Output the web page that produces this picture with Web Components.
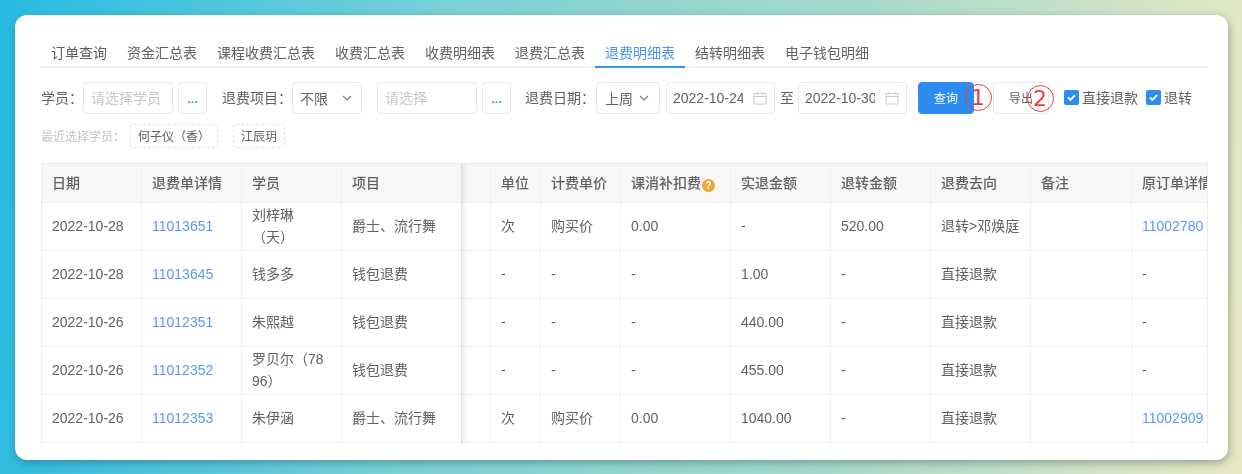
<!DOCTYPE html>
<html lang="zh">
<head>
<meta charset="utf-8">
<title>退费明细表</title>
<style>
html,body{margin:0;height:100%}
body{width:1242px;height:474px;box-sizing:border-box;padding:15px 14px 14px 15px;overflow:hidden;
background:linear-gradient(96deg,#27bbe2 0%,#7dd2d6 36%,#a8dacb 68%,#e9e9c4 100%);
font-family:"Liberation Sans","Noto Sans CJK SC",sans-serif;font-size:14px;color:#606266;text-spacing-trim:space-all}
.l{padding-bottom:3px}
</style>
</head>
<body>
<refund-card>
  <refund-tabs>
    <refund-tab>订单查询</refund-tab><refund-tab>资金汇总表</refund-tab><refund-tab>课程收费汇总表</refund-tab><refund-tab>收费汇总表</refund-tab><refund-tab>收费明细表</refund-tab><refund-tab>退费汇总表</refund-tab><refund-tab active>退费明细表</refund-tab><refund-tab>结转明细表</refund-tab><refund-tab>电子钱包明细</refund-tab>
  </refund-tabs>
  <refund-filters>
    <span class="l">学员：</span>
    <text-box w="90" placeholder>请选择学员</text-box>
    <dots-button style="margin-left:5px"></dots-button>
    <span class="l" style="margin-left:15px">退费项目：</span>
    <select-box w="70">不限</select-box>
    <text-box w="100" placeholder style="margin-left:15px">请选择</text-box>
    <dots-button style="margin-left:5px"></dots-button>
    <span class="l" style="margin-left:14px">退费日期：</span>
    <select-box w="64" pad="8" style="margin-left:1px">上周</select-box>
    <date-box style="margin-left:6px">2022-10-24</date-box>
    <span class="l" style="margin:0 4px 0 5px">至</span>
    <date-box>2022-10-30</date-box>
    <action-button primary style="margin-left:11px">查询</action-button>
    <action-button style="margin-left:19px">导出</action-button>
    <check-box style="margin-left:15px">直接退款</check-box>
    <check-box style="margin-left:8px">退转</check-box>
    <circle-mark style="left:923.5px;top:1.5px">1</circle-mark>
    <circle-mark style="left:985.5px;top:2.5px">2</circle-mark>
  </refund-filters>
  <recent-row>
    <span style="padding-bottom:2px">最近选择学员：</span>
    <dash-tag style="margin-left:5px">何子仪（香）</dash-tag>
    <dash-tag style="margin-left:15px">江辰玥</dash-tag>
  </recent-row>
  <refund-table></refund-table>
</refund-card>
<script>
function define(name, css, html, init){
  customElements.define(name, class extends HTMLElement{
    constructor(){super();this.attachShadow({mode:'open'}).innerHTML='<style>'+css+'</style>'+html;}
    connectedCallback(){if(init)init.call(this,this.shadowRoot);}
  });
}
const FONT='font-family:"Liberation Sans","Noto Sans CJK SC",sans-serif;';
const BOX='box-sizing:border-box;height:32px;border:1px solid #e6e8ee;border-radius:4px;background:#fff;';

define('refund-card',
  ':host{display:block;box-sizing:border-box;height:445px;background:#fff;border-radius:12px;padding:27px 20px 0 26px;box-shadow:1px 3px 8px rgba(30,60,70,.38);filter:blur(.35px);'+FONT+'}',
  '<slot></slot>');

define('refund-tabs',
  ':host{display:flex;box-sizing:border-box;height:26px;border-bottom:2px solid #f0f1f4;align-items:flex-start}',
  '<slot></slot>');

define('refund-tab',
  ':host{display:block;box-sizing:border-box;height:26px;line-height:22px;padding:0 10px;font-size:14px;color:#606266;white-space:nowrap}'+
  ':host([active]){color:#4a94f5;border-bottom:2px solid #3a96f5}',
  '<slot></slot>');

define('refund-filters',
  ':host{display:flex;position:relative;align-items:center;height:32px;margin-top:14px;font-size:14px;color:#606266;white-space:nowrap}',
  '<slot></slot>');

define('text-box',
  ':host{display:block;flex:none;'+BOX+'line-height:30px;padding:0 7px;font-size:14px;color:#606266;overflow:hidden;white-space:nowrap}'+
  ':host([placeholder]){color:#c4c7ce}',
  '<slot></slot>',
  function(){this.style.width=this.getAttribute('w')+'px';});

define('dots-button',
  ':host{display:block;flex:none;'+BOX+'width:29px;line-height:33px;text-align:center;color:#4a94f5;font-weight:700;font-size:12px}',
  '<span>...</span>');

define('select-box',
  ':host{display:flex;flex:none;align-items:center;justify-content:space-between;'+BOX+'padding:0 9px 0 7px;font-size:14px;color:#606266}'+
  'svg{flex:none}span{padding-bottom:1px}',
  '<span><slot></slot></span><svg width="10" height="6" viewBox="0 0 10 6" fill="none" stroke="#7d8088" stroke-width="1.2"><path d="M1 1l4 4 4-4"/></svg>',
  function(){this.style.width=this.getAttribute('w')+'px';
    if(this.hasAttribute('pad')){this.style.paddingLeft=this.getAttribute('pad')+'px';this.style.paddingRight='10px';}});

define('date-box',
  ':host{display:flex;flex:none;align-items:center;'+BOX+'width:109px;padding:0 7px 0 6px;font-size:14px;color:#606266}'+
  '.t{width:70px;overflow:hidden;white-space:nowrap;flex:none}svg{flex:none;margin-left:10px}',
  '<span class="t"><slot></slot></span><svg width="14" height="14" viewBox="0 0 14 14" fill="none" stroke="#c9ccd3" stroke-width="1"><rect x="1" y="2.5" width="12" height="10.5" rx=".5"/><path d="M1 5.5h12M4 1v2.5M10 1v2.5"/></svg>');

define('action-button',
  ':host{display:block;flex:none;'+BOX+'width:56px;line-height:32px;text-align:center;font-size:12px;color:#606266}'+
  ':host([primary]){background:#2d8cf0;border-color:#2d8cf0;color:#fff}',
  '<slot></slot>');

define('check-box',
  ':host{display:flex;flex:none;align-items:center;font-size:14px;color:#606266}'+
  'i{display:block;box-sizing:border-box;width:15px;height:15px;border-radius:2px;background:#2d8cf0;margin-right:3px;position:relative;margin-top:-1px}'+
  'svg{display:block}span{padding-bottom:3px}',
  '<i><svg width="15" height="15" viewBox="0 0 15 15" fill="none" stroke="#fff" stroke-width="2"><path d="M4 7.5l2.4 2.4 4.6-4.8"/></svg></i><span><slot></slot></span>');

define('circle-mark',
  ':host{position:absolute;box-sizing:border-box;width:27px;height:27px;border:1.4px solid #ee3a3a;border-radius:50%;color:#ee3a3a;font:22px/25px "DejaVu Sans",sans-serif;text-align:center;pointer-events:none}',
  '<slot></slot>');

define('recent-row',
  ':host{display:flex;align-items:center;height:24px;margin-top:10px;font-size:12px;color:#c0c4cc;white-space:nowrap}',
  '<slot></slot>');

define('dash-tag',
  ':host{display:block;flex:none;box-sizing:border-box;height:24px;line-height:24px;padding:0 7px;border:1px dashed #e2e4e9;border-radius:3px;font-size:12px;color:#606266}',
  '<slot></slot>');

const COLS=[100,100,100,120,29,50,80,110,100,100,100,101,110];
const HEAD=['日期','退费单详情','学员','项目','','单位','计费单价','课消补扣费','实退金额','退转金额','退费去向','备注','原订单详情'];
const ROWS=[
 ['2022-10-28','@11013651','刘梓琳（天）','爵士、流行舞','','次','购买价','0.00','-','520.00','退转>邓焕庭','','@11002780'],
 ['2022-10-28','@11013645','钱多多','钱包退费','','-','-','-','1.00','-','直接退款','','-'],
 ['2022-10-26','@11012351','朱熙越','钱包退费','','-','-','-','440.00','-','直接退款','','-'],
 ['2022-10-26','@11012352','罗贝尔（7896）','钱包退费','','-','-','-','455.00','-','直接退款','','-'],
 ['2022-10-26','@11012353','朱伊涵','爵士、流行舞','','次','购买价','0.00','1040.00','-','直接退款','','@11002909'],
 ['','','','','','','','','','','','','']
];
define('refund-table',
  ':host{display:block;position:relative;box-sizing:border-box;height:281px;margin-top:15px;width:1167px;border:1px solid #eceef1;border-bottom:0;overflow:hidden}'+
  'table{border-collapse:separate;border-spacing:0;table-layout:fixed;width:1100px;'+FONT+'font-size:14px;color:#606266}'+
  'th,td{box-sizing:border-box;padding:0 10px;border-right:1px solid #f0f1f3;border-bottom:1px solid #f0f1f3;text-align:left;word-break:break-all;line-height:22px}'+
  'th{height:39px;background:#f7f7f8;font-weight:500;white-space:nowrap;overflow:hidden}'+
  'td{height:48px;padding-bottom:2px}'+
  'a{color:#5a98f8;text-decoration:none}'+
  '.q{display:inline-block;width:13px;height:13px;border-radius:50%;background:#f0a635;color:#fff;font:700 10px/13px "Liberation Sans",sans-serif;text-align:center;margin-left:1px;vertical-align:-1px}'+
  '.shade{position:absolute;left:419px;top:0;bottom:0;width:7px;background:linear-gradient(90deg,rgba(0,0,0,.08),rgba(0,0,0,0));pointer-events:none}',
  '<table><colgroup></colgroup><thead><tr></tr></thead><tbody></tbody></table><div class="shade"></div>',
  function(root){
    if(root.querySelector('th'))return;
    root.querySelector('colgroup').innerHTML=COLS.map(w=>'<col style="width:'+w+'px">').join('');
    root.querySelector('thead tr').innerHTML=HEAD.map(h=>'<th>'+h+(h==='课消补扣费'?'<span class="q">?</span>':'')+'</th>').join('');
    root.querySelector('tbody').innerHTML=ROWS.map(r=>'<tr>'+r.map(c=>'<td>'+(c[0]==='@'?'<a>'+c.slice(1)+'</a>':c.replace(/>/g,'&gt;'))+'</td>').join('')+'</tr>').join('');
  });
</script>
</body>
</html>
